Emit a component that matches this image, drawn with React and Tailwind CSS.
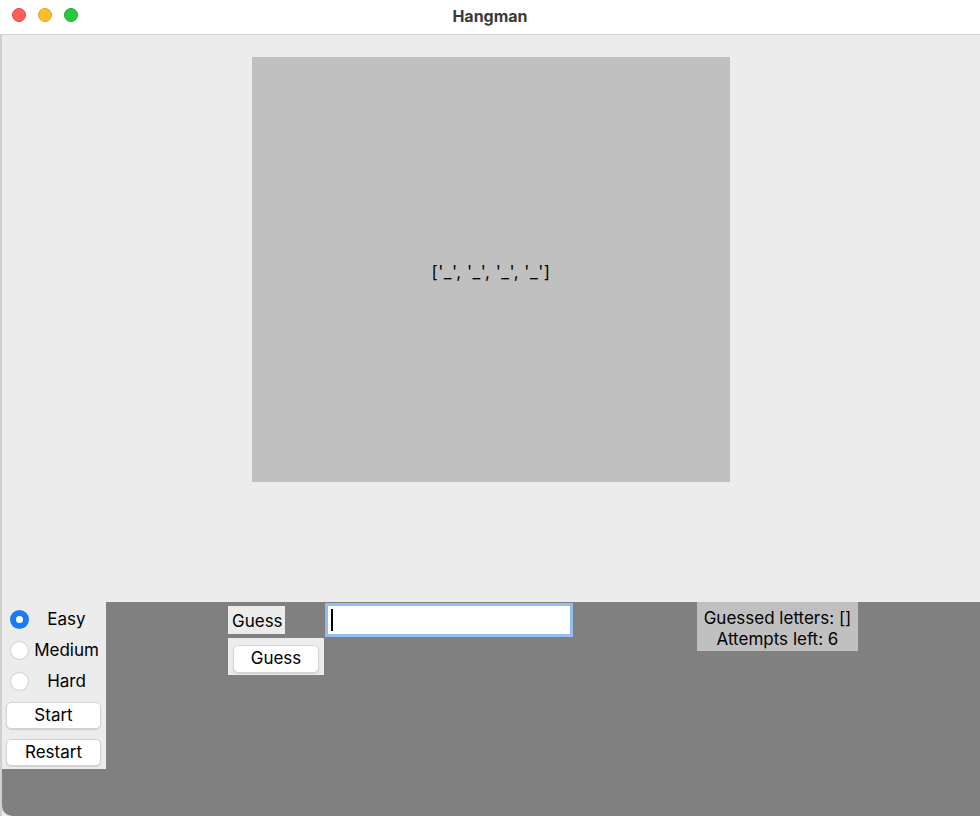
import React from 'react';

function Radio({ label, checked }) {
  return (
    <div className="flex items-center h-[31px]">
      {checked ? (
        <div className="ml-[8px] w-[19px] h-[19px] rounded-full bg-[#1a7cf5] flex items-center justify-center">
          <div className="w-[7px] h-[7px] rounded-full bg-white" />
        </div>
      ) : (
        <div className="ml-[8px] w-[19px] h-[19px] rounded-full bg-white border border-[#cfcfcf]" />
      )}
      <span className="flex-1 text-center text-[17px] text-black -ml-[2px]">{label}</span>
    </div>
  );
}

function MacButton({ label, className }) {
  return (
    <div
      className={
        'bg-white rounded-[5px] border border-[#d4d4d4] shadow-[0_1px_1px_rgba(0,0,0,0.12)] flex items-center justify-center text-[17px] text-black ' +
        className
      }
    >
      {label}
    </div>
  );
}

export default function App() {
  return (
    <div className="w-[980px] h-[816px] flex flex-col overflow-hidden bg-[#ececec] font-['Inter','Liberation_Sans',sans-serif]">
      {/* title bar */}
      <div className="relative h-[35px] shrink-0 bg-white border-b border-[#d3d3d3] flex items-center justify-center">
        <div className="absolute left-[12px] top-[8px] flex gap-[12px]">
          <div className="w-[14px] h-[14px] rounded-full bg-[#fe5f57] border border-[#e2463f]" />
          <div className="w-[14px] h-[14px] rounded-full bg-[#febc2e] border border-[#e0a027]" />
          <div className="w-[14px] h-[14px] rounded-full bg-[#28c840] border border-[#1aab29]" />
        </div>
        <span className="text-[16px] font-bold text-[#3b3b3b] -mt-[3px]">Hangman</span>
      </div>

      <div className="flex-1 flex border-l-[2px] border-[#cfcfcf]">
        <div className="flex-1 flex flex-col">
          {/* canvas area */}
          <div className="h-[567px] shrink-0 pt-[22px] pl-[250px]">
            <div className="w-[478px] h-[425px] bg-[#c0c0c0] flex items-center justify-center">
              <span className="text-[17px] text-black tracking-[0.5px] mt-[6px]">['_', '_', '_', '_']</span>
            </div>
          </div>

          {/* bottom controls */}
          <div className="flex-1 bg-[#808080] flex items-start rounded-bl-[10px]">
            <div className="w-[104px] h-[167px] bg-[#ececec] flex flex-col pt-[2px]">
              <Radio label="Easy" checked />
              <Radio label="Medium" />
              <Radio label="Hard" />
              <div className="flex flex-col gap-[10px] mt-[5px] pl-[4px]">
                <MacButton label="Start" className="w-[95px] h-[27px]" />
                <MacButton label="Restart" className="w-[95px] h-[27px]" />
              </div>
            </div>

            <div className="ml-[122px] w-[96px] flex flex-col">
              <div className="mt-[4px] w-[57px] h-[28px] bg-[#ececec] flex items-center pl-[4px] pt-[3px] text-[17px] text-black">
                Guess
              </div>
              <div className="mt-[4px] w-[96px] h-[37px] bg-[#ececec] pt-[7px] pl-[5px]">
                <MacButton label="Guess" className="w-[86px] h-[28px]" />
              </div>
            </div>

            <div className="ml-[1px] mt-[1px] w-[248px] h-[34px] bg-white border-[3px] border-[#93bdf2] flex items-center pl-[3px]">
              <div className="w-[1.5px] h-[22px] bg-black" />
            </div>

            <div className="ml-[124px] w-[161px] h-[49px] bg-[#c0c0c0] flex flex-col items-center justify-center pt-[4px] text-[17px] leading-[21px] text-black">
              <span>Guessed letters: []</span>
              <span>Attempts left: 6</span>
            </div>
          </div>
        </div>
      </div>
    </div>
  );
}
